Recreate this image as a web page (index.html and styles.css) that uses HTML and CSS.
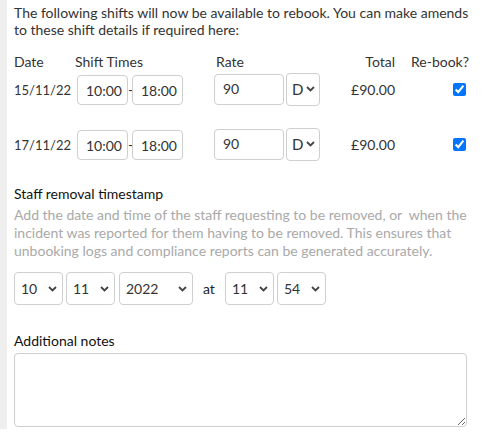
FILE: index.html
```html
<!DOCTYPE html>
<html>
<head>
<meta charset="utf-8">
<link rel="stylesheet" href="styles.css">
</head>
<body>
<div class="panel">
  <p class="intro">The following shifts will now be available to rebook. You can make amends to these shift details if required here:</p>

  <div class="shift-grid">
    <div class="row head">
      <div class="c-date">Date</div>
      <div class="c-times head-times">Shift Times</div>
      <div class="c-rate head-rate">Rate</div>
      <div class="c-total">Total</div>
      <div class="c-rebook head-rebook">Re-book?</div>
    </div>

    <div class="row shift">
      <div class="c-date date-val">15/11/22</div>
      <div class="c-times">
        <input class="time" type="text" value="10:00"><span class="dash">-</span><input class="time" type="text" value="18:00">
      </div>
      <div class="c-rate">
        <input class="rate" type="text" value="90">
        <span class="sel sel-d"><select><option>D</option></select><svg class="chev" width="9" height="6" viewBox="0 0 9 6"><path d="M1 1l3.5 3.5L8 1" fill="none" stroke="#444" stroke-width="1.8"/></svg></span>
      </div>
      <div class="c-total">£90.00</div>
      <div class="c-rebook"><input type="checkbox" checked></div>
    </div>

    <div class="row shift">
      <div class="c-date date-val">17/11/22</div>
      <div class="c-times">
        <input class="time" type="text" value="10:00"><span class="dash">-</span><input class="time" type="text" value="18:00">
      </div>
      <div class="c-rate">
        <input class="rate" type="text" value="90">
        <span class="sel sel-d"><select><option>D</option></select><svg class="chev" width="9" height="6" viewBox="0 0 9 6"><path d="M1 1l3.5 3.5L8 1" fill="none" stroke="#444" stroke-width="1.8"/></svg></span>
      </div>
      <div class="c-total">£90.00</div>
      <div class="c-rebook"><input type="checkbox" checked></div>
    </div>
  </div>

  <h3 class="label">Staff removal timestamp</h3>
  <p class="help">Add the date and time of the staff requesting to be removed, or&nbsp; when the incident was reported for them having to be removed. This ensures that unbooking logs and compliance reports can be generated accurately.</p>

  <div class="stamp">
    <span class="sel w49"><select><option>10</option></select><svg class="chev" width="9" height="6" viewBox="0 0 9 6"><path d="M1 1l3.5 3.5L8 1" fill="none" stroke="#444" stroke-width="1.8"/></svg></span>
    <span class="sel w49"><select><option>11</option></select><svg class="chev" width="9" height="6" viewBox="0 0 9 6"><path d="M1 1l3.5 3.5L8 1" fill="none" stroke="#444" stroke-width="1.8"/></svg></span>
    <span class="sel w74"><select><option>2022</option></select><svg class="chev" width="9" height="6" viewBox="0 0 9 6"><path d="M1 1l3.5 3.5L8 1" fill="none" stroke="#444" stroke-width="1.8"/></svg></span>
    <span class="at">at</span>
    <span class="sel w49"><select><option>11</option></select><svg class="chev" width="9" height="6" viewBox="0 0 9 6"><path d="M1 1l3.5 3.5L8 1" fill="none" stroke="#444" stroke-width="1.8"/></svg></span>
    <span class="sel w49"><select><option>54</option></select><svg class="chev" width="9" height="6" viewBox="0 0 9 6"><path d="M1 1l3.5 3.5L8 1" fill="none" stroke="#444" stroke-width="1.8"/></svg></span>
  </div>

  <h3 class="label notes-label">Additional notes</h3>
  <textarea class="notes"></textarea>
</div>
</body>
</html>
```

FILE: styles.css
```css
html, body {
  margin: 0;
  padding: 0;
  background: #fff;
}
body {
  font-family: Lato, "Open Sans", sans-serif;
  font-size: 14px;
  color: #333;
  width: 497px;
  height: 433px;
  overflow: hidden;
}
.panel {
  border-left: 7px solid #eeeeee;
  padding: 4px 0 0 7px;
  height: 429px;
  box-sizing: border-box;
  width: 474px;
}
.intro {
  margin: 0;
  line-height: 17px;
  color: #333;
}
.shift-grid {
  margin-top: 14px;
}
.row {
  display: flex;
  align-items: center;
  white-space: nowrap;
}
.row.head {
  height: 18px;
}
.row.shift {
  height: 32px;
  margin-top: 3px;
}
.row.shift + .row.shift {
  margin-top: 23px;
}
.c-date { width: 63px; flex: none; }
.date-val { font-size: 13px; padding-top: 2px; }
.c-times { width: 106px; flex: none; display: flex; align-items: center; }
.c-rate { width: 106px; margin-left: 31px; flex: none; display: flex; align-items: center; }
.c-total { width: 75px; flex: none; text-align: right; }
.c-rebook { width: 73px; flex: none; display: flex; justify-content: flex-end; }
.head-times { margin-left: -2px; padding-left: 0; width: 108px; }
.head-rate { padding-left: 2px; width: 104px; }
.head-rebook { justify-content: flex-start; padding-left: 16px; width: 57px; }

input.time, input.rate, textarea.notes, .sel select {
  font-family: Lato, "Open Sans", sans-serif;
  font-size: 14px;
  color: #333;
  border: 1px solid #cfcfcf;
  border-radius: 4px;
  background: #fff;
  box-sizing: border-box;
  outline: none;
}
input.time {
  width: 51px;
  height: 30px;
  padding: 0 0 0 8px;
  margin-top: 2px;
}
.dash {
  width: 4px;
  text-align: center;
  font-size: 14px;
  line-height: 14px;
  margin-top: 2px;
}
input.rate {
  width: 70px;
  height: 31px;
  padding: 0 0 2px 8px;
}
.sel {
  position: relative;
  display: inline-block;
  flex: none;
}
.sel select {
  -webkit-appearance: none;
  appearance: none;
  width: 100%;
  display: block;
  padding: 0 0 0 6px;
}
.sel .chev {
  position: absolute;
  right: 6px;
  top: 50%;
  margin-top: -3px;
  pointer-events: none;
}
.sel-d {
  width: 34px;
  margin-left: 2px;
}
.sel-d select {
  height: 33px;
  padding-left: 5px;
  font-size: 15px;
}
.sel-d .chev { right: 5px; }
input[type="checkbox"] {
  width: 13px;
  height: 13px;
  margin: 0 2px 0 0;
  accent-color: #0075ff;
}

.label {
  margin: 0;
  font-size: 14px;
  font-weight: 400;
  color: #111;
  line-height: 18px;
}
.label:first-of-type {
  margin-top: 25px;
}
.help {
  margin: 3px 0 0;
  color: #a9a9a9;
  line-height: 18px;
}
.stamp {
  display: flex;
  align-items: center;
  margin-top: 12px;
  gap: 3px;
}
.stamp .sel select {
  height: 33px;
  padding-left: 6px;
}
.w49 { width: 49px; }
.w74 { width: 74px; margin-left: 1px; }
.at {
  margin: 0 7px 0 7px;
  color: #222;
}
.notes-label {
  margin-top: 27px;
}
textarea.notes {
  display: block;
  width: 453px;
  height: 74px;
  margin-top: 3px;
  resize: vertical;
}
```
